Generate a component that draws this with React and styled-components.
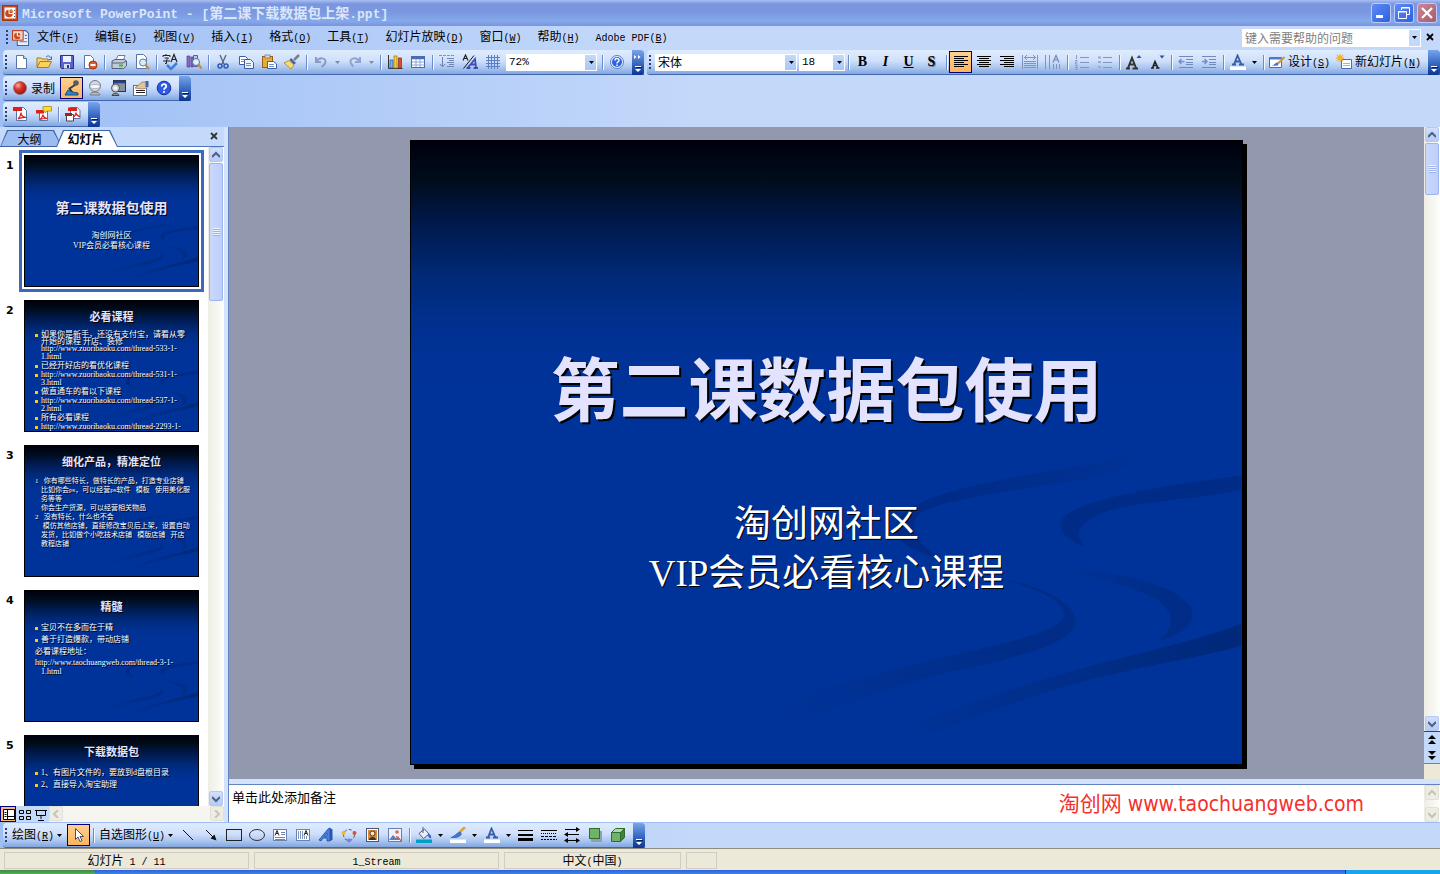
import React from "react";
import styled, { createGlobalStyle, css } from "styled-components";

const CJK = '"Noto Sans CJK SC", sans-serif';

const Global = createGlobalStyle`
  *, *::before, *::after { box-sizing: border-box; }
  body { margin: 0; overflow: hidden; font: 12px/16px ${CJK}; color: #000; background: #c3d7f9; }
  button, input, select, textarea { font: inherit; color: inherit; margin: 0; padding: 0; border: 0; border-radius: 0; background: none; }
  h1, h2, p, ol, ul { margin: 0; padding: 0; font-weight: inherit; font-size: inherit; }
  ol, ul { list-style: none; }
  svg { display: block; flex: none; }
`;

/* ---------- shared pieces ---------- */

const Mono = styled.span`
  font-family: "Liberation Mono", ${CJK};
  font-size: 10px;
`;
const Key = ({ k }) => <Mono>(<u>{k}</u>)</Mono>;

const Gap = styled.span`
  flex: none;
  width: 2px;
`;
const Space = styled.span`
  flex: 1;
`;

const Window = styled.div`
  display: flex;
  flex-direction: column;
  width: 100%;
  height: 100vh;
`;

/* ---------- title bar ---------- */

const TitleBar = styled.header`
  display: flex;
  align-items: center;
  height: 26px;
  padding: 0 3px 0 2px;
  background: linear-gradient(#a8c0f2 0, #7a96df 4px, #7b97e0 12px, #84a9ea 21px, #7c93dd 26px);
`;
const TitleText = styled.h1`
  flex: 1;
  margin-left: 4px;
  white-space: pre;
  font-weight: 700;
  font-size: 14px;
  line-height: 20px;
  color: #dbe6fb;
`;
const TitleLatin = styled.span`
  font-family: "Liberation Mono", monospace;
  font-size: 13px;
`;
const Controls = styled.div`
  display: flex;
  gap: 3px;
`;
const Control = styled.button`
  display: grid;
  place-items: center;
  width: 20px;
  height: 20px;
  border: 1px solid #b9cdf8;
  border-radius: 3px;
  background: ${(p) => (p.$close ? "linear-gradient(135deg,#c98a96,#a9586b)" : "linear-gradient(135deg,#5e8bf5,#2f5fe0)")};
`;

/* ---------- menu ---------- */

const MenuBar = styled.nav`
  display: flex;
  align-items: center;
  height: 24px;
  padding: 0 3px 2px 4px;
  background: linear-gradient(90deg, #9ebef5, #c4d9fa 45%);
`;
const MenuItem = styled.button`
  padding: 0 8px;
  white-space: nowrap;
  line-height: 20px;
`;
const HelpBox = styled.div`
  display: flex;
  width: 179px;
  height: 18px;
  margin: 1px 2px 0 auto;
  padding: 1px;
  background: #fff;
`;
const HelpInput = styled.input`
  flex: 1;
  min-width: 0;
  padding-left: 2px;
  &::placeholder { color: #808080; opacity: 1; }
`;
const DropBox = styled.button`
  display: grid;
  place-items: center;
  width: 11px;
  background: #c3d9fb;
`;
const CloseDoc = styled.button`
  display: grid;
  place-items: center;
  width: 14px;
  height: 16px;
`;

/* ---------- toolbars ---------- */

const Dock = styled.div`
  display: grid;
  gap: 1px;
  background: linear-gradient(90deg, #9ebef5, #c4d9fa 50%);
`;
const DockRow = styled.div`
  display: flex;
  gap: 3px;
  padding-left: 3px;
`;
const Bar = styled.div`
  display: flex;
  align-items: center;
  flex: ${(p) => (p.$grow ? "1" : "none")};
  height: 25px;
  border-bottom: 1px solid #3f67ad;
  border-radius: 4px 0 0 3px;
  background: linear-gradient(#dfecfe 0, #cfe0fb 45%, #a9c5f0 75%, #83a6e0 100%);
`;
const Grip = styled.span`
  flex: none;
  width: 3px;
  height: 15px;
  margin: 0 1px 0 2px;
  background: repeating-linear-gradient(#27417b 0 2px, transparent 2px 4px) 0 0 / 2px 15px no-repeat;
`;
const Sep = styled.span`
  flex: none;
  width: 2px;
  height: 15px;
  margin: 0 1px 0 3px;
  border-left: 1px solid #6a8ccb;
  border-right: 1px solid #f1f9ff;
`;
const ToolButton = styled.button`
  display: flex;
  align-items: center;
  justify-content: center;
  flex: none;
  width: 23px;
  height: 22px;
  ${(p) =>
    p.$on &&
    css`
      border: 1px solid #000080;
      background: linear-gradient(#ffd091, #fdb35c);
    `}
`;
const TextButton = styled.button`
  display: flex;
  align-items: center;
  flex: none;
  gap: 3px;
  height: 22px;
  padding: 0 ${(p) => (p.$menu ? 0 : 3)}px 0 3px;
  white-space: nowrap;
`;
const Drop = styled.button`
  display: grid;
  place-items: center;
  flex: none;
  width: 11px;
  height: 22px;
`;
const OverflowTab = styled.button`
  display: flex;
  align-items: flex-end;
  justify-content: center;
  flex: none;
  width: 12px;
  height: 25px;
  margin-left: ${(p) => (p.$end ? "auto" : "4px")};
  padding-bottom: 2px;
  border-radius: 0 3px 3px 0;
  background: linear-gradient(#79a4ec, #3b6cc4 50%, #0a3590);
`;
const Combo = styled.label`
  position: relative;
  display: flex;
  flex: none;
  width: ${(p) => p.$w}px;
  height: 17px;
  svg { position: absolute; right: 3px; top: 7px; pointer-events: none; }
`;
const Select = styled.select`
  appearance: none;
  width: 100%;
  padding-left: 2px;
  border: 1px solid #fff;
  background: linear-gradient(#c3d9fb, #a9c6f4) right / 11px 100% no-repeat #fff;
  font-family: ${(p) => (p.$mono ? `"Liberation Mono", monospace` : CJK)};
  font-size: ${(p) => (p.$mono ? 11 : 12)}px;
  line-height: 14px;
`;
const BottomDock = styled.div`
  display: flex;
  flex: none;
  height: 26px;
  padding-left: 3px;
  border-top: 1px solid #9ebef5;
  background: linear-gradient(90deg, #9ebef5, #c4d9fa 50%);
`;

const Caret = ({ c = "#000" }) => (
  <svg width="5" height="3" viewBox="0 0 5 3"><path d="M0 0h5L2.500 3z" fill={c} /></svg>
);
const MoreMark = ({ chevrons }) => (
  <svg width="8" height={chevrons ? 20 : 8} viewBox={chevrons ? "0 -12 8 20" : "0 0 8 8"}>
    {chevrons && <path d="M0-10l2.500 2L0-6zM4-10l2.500 2L4-6z" fill="#fff" />}
    <path d="M1 1h6v1H1zM1 4h6L4 7z" fill="#fff" />
    <path d="M2 2h6v1H2z" fill="#001a5c" />
  </svg>
);

/* ---------- icon drawings, all on a 16 unit grid ---------- */

const page = <path d="M3.500 1.500h7l3 3v10h-10z" fill="#fff" stroke="#5a76a8" />;
const lines = (x1, x2, ys, c = "#000") => ys.map((y) => <path key={y} d={`M${x1} ${y}.500H${x2}`} stroke={c} />);

const art = {
  ppt: <><rect x=".500" y=".500" width="15" height="15" fill="#c44a1c" stroke="#a3350f" /><rect x="2.500" y="2.500" width="11" height="11" fill="#fff" /><circle cx="7" cy="8.500" r="3.800" fill="#c44a1c" /><path d="M7 8.500V4.200" stroke="#fff" /><path d="M7 8.500h4.300" stroke="#fff" /><path d="M8.500 7V3.500A4 4 0 0 1 11.500 7z" fill="#e58a5e" /><path d="M12.500 5v1M12.500 8v1M12.500 11v1" stroke="#555" /></>,
  pptDoc: <><path d="M5 1.500h8l2.500 2.500v11.500H5z" fill="#e8f0ff" stroke="#44659b" /><path d="M12 6h2M12 9h2M7 12h7" stroke="#5575ae" /><rect x=".500" y="1.500" width="10" height="9" fill="#f3d2c4" stroke="#b5401a" /><circle cx="5" cy="6.500" r="3" fill="#c9461c" /><path d="M5 6.500V3M5 6.500h3.500" stroke="#fff" /></>,
  blank: <>{page}<path d="M10.500 1.500v3h3" fill="#cddcf4" stroke="#5a76a8" /></>,
  open: <><path d="M1 13V4h4l1 1h6v3" fill="#f7d774" stroke="#a87b18" /><path d="M1 13.500L4 7.500h11.500l-3 6z" fill="#fbd05c" stroke="#a87b18" /><path d="M10 3c2-2 4-1 4.500 1M15.500 2.500v3h-3" fill="none" stroke="#3d66ad" /></>,
  save: <><path d="M1.500 1.500h13v13h-12l-1-1z" fill="#5a62d0" stroke="#2b2f8c" /><rect x="4" y="2" width="8" height="6" fill="#eef3ff" /><rect x="5" y="10" width="6" height="4.500" fill="#d8dcf0" /><rect x="8" y="11" width="2" height="3" fill="#2b2f8c" /></>,
  permission: <><path d="M2.500 1.500h6l3 3v10h-9z" fill="#fff" stroke="#5a76a8" /><circle cx="11" cy="11" r="4" fill="#e25a33" stroke="#a8320f" /><path d="M8.500 11h5" stroke="#fff" strokeWidth="2" /></>,
  print: <><path d="M5 6l2-4.500h7L12.500 6z" fill="#fff" stroke="#6a7fa8" /><path d="M1 7l3-1.500h9.500L15.500 7v5l-3 2.500H1z" fill="#c2cad8" stroke="#55617c" /><path d="M1 9h11l3-2" fill="none" stroke="#55617c" /><rect x="8" y="10.500" width="4" height="2" fill="#35b83e" /></>,
  preview: <><path d="M2.500.500h7l3 3v11h-10z" fill="#fff" stroke="#5a76a8" /><circle cx="9" cy="8.500" r="3.500" fill="#d5ecfb" stroke="#6b7b93" /><path d="M11.500 11l3.500 4" stroke="#c58a36" strokeWidth="2.200" /></>,
  research: <><path d="M1 2h3v11H1zM5 3h2v10H5z" fill="#8a6bc7" stroke="#533b8f" strokeWidth=".700" /><path d="M7.500 1.500h4v11h-4z" fill="#b9c9e9" stroke="#4a619b" /><circle cx="10" cy="8" r="3.500" fill="#dff1fc" stroke="#57709a" /><path d="M12.500 10.500l3 4" stroke="#c58a36" strokeWidth="2.200" /></>,
  cut: <><path d="M5 1l4 9M11 1L7 10" stroke="#55647e" strokeWidth="1.300" /><circle cx="5" cy="12" r="2" fill="none" stroke="#2f58b8" strokeWidth="1.500" /><circle cx="11" cy="12" r="2" fill="none" stroke="#2f58b8" strokeWidth="1.500" /></>,
  copy: <><path d="M1.500 2.500h6l2 2v6h-8z" fill="#fff" stroke="#3a5da5" /><path d="M6.500 5.500h6l3 3v6h-9z" fill="#eaf1ff" stroke="#3a5da5" />{lines(3, 6, [5, 7], "#6c8fd0")}{lines(8, 13, [9, 11], "#6c8fd0")}</>,
  paste: <><rect x="1.500" y="2.500" width="10" height="11" fill="#eaa93b" stroke="#96621a" /><rect x="4" y="1" width="5" height="3" fill="#d9dbe2" stroke="#6a6f80" strokeWidth=".700" /><path d="M6.500 7.500h6l3 2.500v4.500h-9z" fill="#fff" stroke="#3a5da5" />{lines(8, 13, [10, 12], "#6c8fd0")}</>,
  painter: <><path d="M15 1l-5 5" stroke="#79808e" strokeWidth="2.500" /><path d="M7 4l5 5-2 1.500L5.500 6z" fill="#4c5f9a" /><path d="M5 6.500L10 11l-3 4L0 9z" fill="#f3dd71" stroke="#a98720" strokeWidth=".800" /></>,
  undo: <path d="M3 3v5h5M3.500 7.500C6 3 13 3.500 12.500 8c-.300 2-2 3.500-4 5" fill="none" stroke="#8a9cc4" strokeWidth="2" />,
  redo: <path d="M13 3v5H8M12.500 7.500C10 3 3 3.500 3.500 8c.300 2 2 3.500 3 4.500" fill="none" stroke="#8fa4d0" strokeWidth="2" />,
  chart: <><path d="M1.500 1v13.500H15.500" fill="none" stroke="#333" /><rect x="3" y="6" width="3" height="8" fill="#7fb0e8" stroke="#23508f" strokeWidth=".700" /><rect x="7" y="2" width="3" height="12" fill="#f4cc42" stroke="#98741a" strokeWidth=".700" /><rect x="11.500" y="4" width="3" height="10" fill="#db4b2b" stroke="#8f2b12" strokeWidth=".700" /></>,
  table: <><rect x="1.500" y="2.500" width="13" height="11" fill="#fff" stroke="#4a6cb0" /><path d="M2 4h12" stroke="#4a6cb0" strokeWidth="2.500" /><path d="M2 8h12M2 11h12M6 5v8M10 5v8" stroke="#8ba6d8" /></>,
  expand: <><path d="M3.500 3v9M1 10l2.500 3L6 10" fill="none" stroke="#6f83ad" /><path d="M0 1.500h16" stroke="#7f94be" strokeDasharray="3 1" />{lines(8, 15, [4, 8, 12], "#7087b8")}{lines(10, 15, [6, 10], "#7087b8")}</>,
  showFormat: <><path d="M1 6.500L3.500 1 6 6.500M2 4.500h3" fill="none" stroke="#222" strokeWidth="1.200" /><path d="M1.500 14.500L12 1.500" stroke="#111" /><path d="M6 13.500L13 5l1 8.500M9 10.500h5M4.500 14h4M11.500 14H16" fill="none" stroke="#3b4fb5" strokeWidth="1.800" /></>,
  grid: <path d="M3.500 1v14M6.500 1v14M9.500 1v14M12.500 1v14M1 3.500h14M1 6.500h14M1 9.500h14M1 12.500h14" stroke="#5a7fc4" />,
  help: <><circle cx="8" cy="8" r="6.500" fill="#e6f0ff" stroke="#5c7fc4" /><circle cx="8" cy="8" r="5" fill="#2c63dc" /><path d="M6 6.500c0-3 4.200-2.600 4 0C9.800 8 8 7.800 8 9.500M8 10.500v1.500" fill="none" stroke="#fff" strokeWidth="1.500" /></>,
  alignL: <>{lines(1, 15, [2, 6, 10])}{lines(1, 11, [4, 8, 12])}</>,
  alignC: <>{lines(1, 15, [2, 6, 10])}{lines(3, 13, [4, 8, 12])}</>,
  alignR: <>{lines(1, 15, [2, 6, 10])}{lines(5, 15, [4, 8, 12])}</>,
  distribute: <><path d="M.500 1v14M15.500 1v14M2 3.500h12M5 1l-2.500 2.500L5 6M11 1l2.500 2.500L11 6" fill="none" stroke="#8093c0" />{lines(2, 14, [7, 9, 11, 13], "#8093c0")}</>,
  vertical: <><path d="M.500 1v14M4.500 1v14M8.500 10v5M11.500 10v5M14.500 10v5" stroke="#8093c0" /><path d="M8 8.500l3-7 3 7M9.500 6h3.500" fill="none" stroke="#7388bb" strokeWidth="1.200" /></>,
  numbers: <>{lines(6, 15, [3, 8, 13], "#8395c0")}<path d="M2.500 1v4M1 6.500h2v1.500H1.500V10H4M1 11.500h2v4H1M1 13.500h2" fill="none" stroke="#8a9cc6" /></>,
  bullets: <>{lines(6, 15, [3, 8, 13], "#8395c0")}<path d="M1 2.500h3v2H1zM1 7h3v2H1zM1 12h3v2H1z" fill="#9aa9cc" /></>,
  grow: <><path d="M0 14.500h4M6.500 14.500H12M2 14L6 4l4 10M3.500 10.500h5" fill="none" stroke="#333" strokeWidth="2" /><path d="M10.500 4h5L13 1z" fill="#2a4fa6" /></>,
  shrink: <><path d="M2 14h3M7 14h3.500M3.500 14L6 7.500 9 14M4.500 11.500h3.500" fill="none" stroke="#222" strokeWidth="1.600" /><path d="M10.500 1.500h5L13 4.500z" fill="#2a4fa6" /></>,
  outdent: <>{lines(1, 15, [2, 13], "#7388bb")}{lines(8, 15, [5, 8, 10], "#7388bb")}<path d="M6.500 7.500H1M3.500 5L1 7.500 3.500 10" fill="none" stroke="#6f8fcf" strokeWidth="1.500" /></>,
  indent: <>{lines(1, 15, [2, 13], "#7388bb")}{lines(8, 15, [5, 8, 10], "#7388bb")}<path d="M1 7.500h5M3.500 5L6 7.500 3.500 10" fill="none" stroke="#6f8fcf" strokeWidth="1.500" /></>,
  fontColor: <><path d="M2 10.500h4M9 10.500h5M4 10.500L7.500 1.500l4 9M5.500 7.500h4.500" fill="none" stroke="#3a5da8" strokeWidth="1.800" /><rect x="0" y="12.500" width="16" height="3.500" fill="#fff" /></>,
  design: <><path d="M.500 3.500h12v10H.500z" fill="#fff" stroke="#4a6cae" /><path d="M1 4.500h11" stroke="#4a7fdb" strokeWidth="2" /><path d="M2 12c3 0 4-4 8-4l-1 3.500z" fill="#3f76d8" /><path d="M15.500 3L9.500 9" stroke="#d69a2b" strokeWidth="2.200" /></>,
  newSlide: <><path d="M5.500 5.500h10v9h-10z" fill="#fff" stroke="#4a6cae" />{lines(7, 14, [9, 11], "#9db4e0")}<path d="M4 0v8M0 4h8M1 1l6 6M7 1L1 7" stroke="#f0b62b" strokeWidth="1.300" /></>,
  record: <><defs><radialGradient id="ball" cx=".35" cy=".3" r=".8"><stop offset="0" stopColor="#f7b0a4" /><stop offset=".4" stopColor="#d8332a" /><stop offset="1" stopColor="#8a1010" /></radialGradient></defs><circle cx="8" cy="8" r="6.500" fill="url(#ball)" stroke="#8d5a5a" strokeWidth=".600" /></>,
  mic: <><circle cx="12" cy="3" r="2.800" fill="#555d6a" /><path d="M11 5L5.500 8.500l3 4" fill="none" stroke="#2c3a4c" strokeWidth="1.800" /><path d="M1 15l3-5 4 2 6 1v2z" fill="#2f86c9" stroke="#174f86" /></>,
  webcam: <><circle cx="8" cy="6" r="5.500" fill="#d5d8de" stroke="#777c88" /><path d="M3 5.500c2-1.500 8-1.500 10 0v2c-2 1.500-8 1.500-10 0z" fill="#f6f7fa" stroke="#9ea2ad" strokeWidth=".700" /><path d="M3 15c1-4 9-4 10 0z" fill="#b5b9c2" stroke="#777c88" /></>,
  camWin: <><rect x="3.500" y=".500" width="12" height="11" fill="#8a909c" stroke="#333" /><path d="M4 2h11" stroke="#1b3f9c" strokeWidth="2.500" /><circle cx="5.500" cy="8" r="4" fill="#d5d8de" stroke="#555" /><circle cx="5.500" cy="8" r="1.500" fill="#fff" /><path d="M2 15.500c.500-3 6.500-3 7 0z" fill="#888d98" stroke="#444" /></>,
  props: <><rect x=".500" y="5.500" width="13" height="10" fill="#fff" stroke="#5b6f9f" />{lines(3, 12, [10, 12], "#222")}<path d="M2 8l7-6h5v6l-5 1z" fill="#e4c39a" stroke="#8c6a45" strokeWidth=".700" /><path d="M12.500 1h3v6h-3z" fill="#3f66b5" /></>,
  qmark: <><circle cx="8" cy="8" r="6.800" fill="#2f5be4" stroke="#1a2f9a" /><path d="M5.700 6.500c0-3.300 4.700-3 4.500-.200C10 8 8 8 8 9.800M8 11v1.700" fill="none" stroke="#fff" strokeWidth="1.800" /></>,
  pdf: <>{page}<rect x="0" y="1" width="9" height="4" fill="#d9221c" /><path d="M5 13c2-2 3-4 3-6.500 0 3 2 4.500 5 5-3-.300-5.500 0-8 1.500z" fill="none" stroke="#d9221c" strokeWidth="1.200" /></>,
  pdfMail: <><path d="M3.500 4.500h8v10h-8z" fill="#fff" stroke="#5a76a8" /><rect x="0" y="4" width="8" height="3.500" fill="#d9221c" /><path d="M4 13.500c2-2 3-3 3-5 0 2 2 3.500 4 4-3 0-5 0-7 1z" fill="none" stroke="#d9221c" strokeWidth="1.200" /><path d="M7 .500h8.500V5H11L9 7V5H7z" fill="#ffd83a" stroke="#b08a10" strokeWidth=".800" /></>,
  pdfReview: <><path d="M5.500 1.500h7l2.500 3v8H5.500z" fill="#fff" stroke="#5a76a8" /><rect x="3" y="1.500" width="9" height="3.500" fill="#d9221c" /><path d="M1.500 8.500h7v6.500h-7z" fill="#fff" stroke="#444" /><rect x="0" y="7" width="7" height="3" fill="#a02020" /><path d="M8 11c2-1 3-3 3-4.500 0 3 2 3.500 4 4" fill="none" stroke="#d9221c" strokeWidth="1.300" /></>,
  pointer: <path d="M4.500 1.500v11l2.500-2.500 2 4.500 2-1-2-4h3.500z" fill="#fff" stroke="#47506b" />,
  line: <path d="M3 3l10 10" stroke="#111" />,
  arrow: <><path d="M3 3l8 8" stroke="#111" /><path d="M13.500 13.500l-2-6-4 4z" fill="#111" /></>,
  rect: <rect x=".500" y="2.500" width="15" height="11" fill="none" stroke="#222" />,
  oval: <ellipse cx="8" cy="8" rx="7.500" ry="5.500" fill="none" stroke="#333" />,
  textBox: <><rect x="1.500" y="2.500" width="13" height="11" fill="#fff" stroke="#6a83b5" /><path d="M3 8.500L5 3.500l2 5M4 6.500h2" fill="none" stroke="#222" />{lines(9, 13, [5, 7], "#6a83b5")}{lines(3, 13, [10, 12], "#6a83b5")}</>,
  vTextBox: <><rect x="1.500" y="2.500" width="13" height="11" fill="#fff" stroke="#6a83b5" /><path d="M3.500 4v8M5.500 4v8M7.500 4v8M9.500 9v3M11.500 9v3" stroke="#8296c0" /><path d="M9 8.500l2-5 2 5M10 6.500h2" fill="none" stroke="#222" /></>,
  wordArt: <><path d="M1 13l9-11 2-1v13H9v-3H5l-2 3zM6.500 9H9V6z" fill="#4b82e0" stroke="#1f469e" strokeWidth=".800" fillRule="evenodd" /><path d="M12 1l2.500 1.500V13L12 14z" fill="#2a56b2" /></>,
  diagram: <><circle cx="8" cy="8" r="5.500" fill="none" stroke="#555" strokeDasharray="3 2" /><circle cx="8" cy="13.500" r="2" fill="#7a7fe0" /><circle cx="2.500" cy="6" r="2" fill="#e9b833" /><circle cx="13.500" cy="6" r="2" fill="#d6543a" /></>,
  clipArt: <><rect x="2.500" y="1.500" width="12" height="13" fill="#fff" stroke="#44577f" /><rect x="4" y="3" width="9" height="10" fill="#d88b3c" /><circle cx="8.500" cy="6.500" r="2.500" fill="#fbe3bf" stroke="#5b3313" /><path d="M5 13c0-4 7-4 7 0z" fill="#333" /></>,
  picture: <><rect x="1.500" y="1.500" width="13" height="13" fill="#eaf2ff" stroke="#6a7fae" /><path d="M2 13l4-5 3 3 2-2 3 4z" fill="#5f7ac1" /><circle cx="10" cy="5" r="1.800" fill="#e2653a" /><path d="M9 9l5 5" stroke="#d45f3a" /></>,
  fill: <><path d="M3 6.500L8.500 2l4.500 5-5.500 4.500z" fill="#e9eef8" stroke="#4b5a78" /><path d="M7 6V0" stroke="#4b5a78" /><path d="M12.500 7c2 1 2.500 2.500 2 4-1.500-.500-2-2-2-4z" fill="#2e62c6" stroke="#2e62c6" /><rect x="0" y="12.500" width="16" height="3.500" fill="#00a0c6" /></>,
  brush: <><path d="M15 0L9 6" stroke="#d9a53a" strokeWidth="2.600" /><path d="M10 5l1.500 2C9 11 5 10.500 1 10.500 5 9.500 6 6 10 5z" fill="#3f76d8" stroke="#24509f" strokeWidth=".600" /><rect x="0" y="12.500" width="16" height="3.500" fill="#fff" /></>,
  lineStyle: <path d="M0 3h15v1H0zM0 7h15v2H0zM0 11h15v3H0z" fill="#000" />,
  dashStyle: <><path d="M0 3.500h16" stroke="#000" /><path d="M0 6.500h16" stroke="#000" strokeDasharray="1 1" /><path d="M0 9.500h16" stroke="#000" strokeDasharray="3 1" /><path d="M0 12.500h16" stroke="#000" strokeDasharray="2 1" /></>,
  arrowStyle: <><path d="M1 2.500h12M3 7.500h12M3 13.500h10" stroke="#000" /><path d="M12 0l4 2.500L12 5zM4 5L0 7.500 4 10zM12 11l4 2.500-4 2.500zM4 11l-4 2.500L4 16z" fill="#000" /></>,
  shadow: <><rect x="4" y="4" width="11" height="11" fill="#8f9fae" /><rect x="2.500" y="1.500" width="10" height="10" fill="#6fb366" stroke="#2f6b2d" /></>,
  cube: <><path d="M1.500 5.500h9v9h-9z" fill="#6fb366" stroke="#2f6b2d" /><path d="M1.500 5.500l4-4h9l-4 4z" fill="#b0dca4" stroke="#2f6b2d" /><path d="M10.500 5.500l4-4v9l-4 4z" fill="#3d8438" stroke="#2f6b2d" /></>,
  normal: <><path d="M2.500 2.500h11v10h-11z" fill="#fff" stroke="#000" /><path d="M6.500 3v10M7 9.500h6M3.500 5.500h2M3.500 7.500h2M3.500 9.500h2" stroke="#000" /></>,
  sorter: <path d="M2.500 3.500h4v3h-4zM9.500 3.500h4v3h-4zM2.500 9.500h4v3h-4zM9.500 9.500h4v3h-4z" fill="none" stroke="#000" />,
  show: <path d="M2 3.500h12M3.500 4v4.500h9V4M8 9v3M5 13.500h6" fill="none" stroke="#000" />,
};

const Icon = ({ n, s = 16 }) => <svg width={s} height={s} viewBox="0 0 16 16" fill="none" aria-hidden="true">{art[n]}</svg>;
const Tool = ({ n, label, on }) => <ToolButton $on={on} aria-label={label}><Icon n={n} /></ToolButton>;
const Tools = ({ items }) =>
  items.map(([n, label, on], i) => {
    if (n === "|") return <Sep key={i} />;
    if (n === "v") return <Drop key={i} aria-label={label}><Caret c={on} /></Drop>;
    return <Tool key={i} n={n} label={label} on={on} />;
  });

const Letter = styled.span`
  font: ${(p) => (p.$i ? "italic " : "")}700 14px/18px "Liberation Serif", serif;
  text-decoration: ${(p) => (p.$u ? "underline" : "none")};
  text-shadow: ${(p) => (p.$s ? "1px 1px 1px #5a6d92" : "none")};
`;

/* ---------- workspace ---------- */

const Workspace = styled.main`
  display: flex;
  flex: 1;
  min-height: 0;
  background: #d3e3fb;
`;
const Outline = styled.aside`
  display: flex;
  flex-direction: column;
  flex: none;
  width: 224px;
`;
const TabStrip = styled.div`
  display: flex;
  align-items: flex-end;
  flex: none;
  height: 20px;
  background: linear-gradient(#4e76b9, #4e76b9) bottom / 100% 1px no-repeat #c3dafb;
`;
const Tab = styled.button`
  position: relative;
  isolation: isolate;
  width: 62px;
  height: 17px;
  margin-right: -6px;
  padding-right: 3px;
  line-height: 15px;
  font-weight: ${(p) => (p.$on ? 700 : 400)};
  z-index: ${(p) => (p.$on ? 1 : 0)};
  clip-path: polygon(0 100%, 7px 0, calc(100% - 8px) 0, 100% 100%);
  background: #3c62a8;
  &::before {
    content: "";
    position: absolute;
    z-index: -1;
    inset: 1px 1px ${(p) => (p.$on ? 0 : 1)}px;
    background: ${(p) => (p.$on ? "#fff" : "#9dbcf2")};
    clip-path: polygon(0 100%, 7px 0, calc(100% - 8px) 0, 100% 100%);
  }
`;
const CloseTab = styled.button`
  display: grid;
  place-items: center;
  width: 15px;
  height: 18px;
  margin: 0 3px auto auto;
`;
const ThumbArea = styled.div`
  display: flex;
  flex: 1;
  min-height: 0;
`;
const ThumbList = styled.ol`
  flex: 1;
  overflow: hidden;
  padding-top: 8px;
  background: #fff;
`;
const ThumbItem = styled.li`
  display: flex;
  margin-bottom: 13px;
`;
const ThumbNo = styled.span`
  width: 24px;
  padding: 4px 0 0 6px;
  font: 700 11px/14px "DejaVu Sans", sans-serif;
`;

/* ---------- slide surface ---------- */

const Surface = styled.section`
  position: relative;
  isolation: isolate;
  overflow: hidden;
  border: 1px solid #000;
  color: #fff;
  background: linear-gradient(#00000f 0, #000c1a 6%, #001744 12%, #002060 17%, #002a78 22%, #002f8c 28%, #003297 34%, #003399 40%);
  > svg { position: absolute; inset: 0; width: 100%; height: 100%; z-index: -1; }
`;
const Thumb = styled(Surface)`
  width: 175px;
  height: 132px;
  font: 8px/9px "Liberation Serif", ${CJK};
  text-shadow: 1px 1px 0 #000;
  box-shadow: ${(p) => (p.$on ? "0 0 0 2px #fff, 0 0 0 5px #3d69bd" : "none")};
`;
const ThumbTitle = styled.h2`
  margin-top: ${(p) => (p.$cover ? 45 : 8)}px;
  margin-bottom: ${(p) => (p.$cover ? 14 : 7)}px;
  text-align: center;
  font-weight: 700;
  font-size: ${(p) => (p.$cover ? 14 : 11)}px;
  line-height: 16px;
  color: #e3e3ff;
`;
const CoverLine = styled.p`
  line-height: 10px;
  text-align: center;
`;
const Lines = styled.ul`
  padding-left: 10px;
  font-size: ${(p) => (p.$small ? 7 : 8)}px;
`;
const Line = styled.li`
  height: ${(p) => p.$h || 9}px;
  line-height: ${(p) => p.$h || 9}px;
  padding-left: ${(p) => (p.$flush ? 0 : 6)}px;
  white-space: pre;
  ${(p) =>
    p.$dot &&
    css`
      background: linear-gradient(#ffcc00, #ffcc00) 0 60% / 3px 3px no-repeat;
    `}
`;

const Swirls = ({ id }) => (
  <svg viewBox="0 0 832 625" preserveAspectRatio="none" aria-hidden="true">
    <defs>
      <linearGradient id={`${id}a`} x1="0" x2="1"><stop offset="0" stopColor="#002a84" /><stop offset=".4" stopColor="#002c88" stopOpacity=".8" /><stop offset="1" stopColor="#002a80" stopOpacity="0" /></linearGradient>
      <linearGradient id={`${id}b`} x1="0" x2="1"><stop offset="0" stopColor="#002a80" stopOpacity="0" /><stop offset=".8" stopColor="#002a80" stopOpacity=".7" /></linearGradient>
      <linearGradient id={`${id}c`} x1="0" x2="1"><stop offset="0" stopColor="#002878" stopOpacity="0" /><stop offset="1" stopColor="#002878" stopOpacity=".95" /></linearGradient>
    </defs>
    <path d="M741 267C742 300 720 315 690 322C620 335 540 345 500 368C470 388 485 408 532 420C503 402 495 385 512 372C545 355 640 348 702 333C730 322 748 305 741 267Z" fill={`url(#${id}a)`} />
    <path d="M831 335C775 344 650 358 650 385C651 396 662 403 677 408C665 400 665 388 680 380C700 362 780 361 831 350Z" fill="#002a80" opacity=".7" />
    <path d="M644 427C690 431 730 438 756 449C795 468 790 490 745 503C766 490 764 474 748 461C722 445 680 438 644 427Z" fill={`url(#${id}b)`} />
    <path d="M587 438C630 446 665 462 665 483C662 506 600 520 530 535C465 552 420 572 367 588V563C425 545 500 525 559 512C610 500 655 490 654 473C648 457 618 447 587 438Z" fill={`url(#${id}b)`} />
    <path d="M831 484C800 497 740 511 690 524C610 545 540 570 483 593H527C560 580 630 552 690 538C740 525 800 516 831 506Z" fill={`url(#${id}c)`} />
  </svg>
);

const SlideThumb = ({ no, title, on, small, children }) => (
  <ThumbItem>
    <ThumbNo>{no}</ThumbNo>
    <Thumb $on={on}>
      <Swirls id={`t${no}`} />
      <ThumbTitle $cover={on}>{title}</ThumbTitle>
      {on ? children : <Lines $small={small}>{children}</Lines>}
    </Thumb>
  </ThumbItem>
);

/* ---------- scroll bars ---------- */

const VScroll = styled.div`
  display: flex;
  flex-direction: column;
  flex: none;
  width: 16px;
  padding: 0 1px;
  background: linear-gradient(90deg, #eeede5, #fefefb);
`;
const Arrow = styled.button`
  display: grid;
  place-items: center;
  flex: none;
  width: 14px;
  height: 15px;
  border: 1px solid ${(p) => (p.$off ? "#e3e1d5" : "#b5c8f3")};
  border-radius: 2px;
  background: ${(p) => (p.$off ? "#eeede4" : "linear-gradient(#d2dffc, #b7cbf6)")};
`;
const ScrollThumb = styled.div`
  display: grid;
  place-items: center;
  flex: none;
  height: ${(p) => p.$size};
  margin-top: 1px;
  border: 1px solid #9db5ee;
  border-radius: 2px;
  background: linear-gradient(90deg, #cad8fc, #bccefb);
  &::before {
    content: "";
    width: 7px;
    height: 8px;
    background: repeating-linear-gradient(#eef4fe 0 1px, #9ab3ee 1px 2px);
  }
`;
const Chevron = ({ d, off }) => (
  <svg width="8" height="8" viewBox="0 0 8 8" fill="none" stroke={off ? "#c6c4b6" : "#4d6185"} strokeWidth="2">
    <path d={{ up: "M0 6l4-4 4 4", down: "M0 2l4 4 4-4", left: "M6 0L2 4l4 4", right: "M2 0l4 4-4 4" }[d]} />
  </svg>
);
const ViewRow = styled.div`
  display: flex;
  flex: none;
  height: 16px;
  background: #c3dafb;
`;
const ViewButton = styled.button`
  display: grid;
  place-items: center;
  width: 16px;
  height: 16px;
  border: 1px solid ${(p) => (p.$on ? "#000080" : "transparent")};
  background: ${(p) => (p.$on ? "#fdb96a" : "none")};
`;
const HScroll = styled.div`
  display: flex;
  justify-content: space-between;
  flex: 1;
  margin-left: 1px;
  background: #f6f5ef;
`;

/* ---------- editing pane ---------- */

const Editor = styled.div`
  display: flex;
  flex-direction: column;
  flex: 1;
  min-width: 0;
  margin-left: 4px;
  border-left: 1px solid #6384c0;
`;
const StageRow = styled.div`
  display: flex;
  flex: 1;
  min-height: 0;
`;
const Stage = styled.div`
  display: flex;
  justify-content: center;
  flex: 1;
  min-width: 0;
  padding: 13px 0 14px;
  background: #9299af;
`;
const Slide = styled(Surface)`
  display: flex;
  flex-direction: column;
  align-items: center;
  aspect-ratio: 4 / 3;
  box-shadow: 4px 4px 0 #000;
  font-family: "Liberation Serif", ${CJK};
`;
const SlideTitle = styled.h2`
  margin-top: 212px;
  font-weight: 700;
  font-size: 69px;
  line-height: 80px;
  color: #e3e3ff;
  text-shadow: 2px 2px 0 #000;
  white-space: nowrap;
`;
const SlideSub = styled.p`
  margin-top: 67px;
  font-size: 37px;
  line-height: 49px;
  text-align: center;
  text-shadow: 1px 1px 0 #000;
  white-space: nowrap;
`;
const Jump = styled.button`
  display: grid;
  place-items: center;
  height: 16px;
  margin: 0 -1px;
  background: #c3dafb;
  border-top: ${(p) => (p.$first ? "1px solid #2c4377" : "0")};
`;
const Corner = styled.div`
  flex: none;
  height: 16px;
  margin: 0 -1px;
  border-top: 1px solid #6384c0;
  background: #ece9d8;
`;
const NotesRow = styled.div`
  display: flex;
  flex: none;
  height: 38px;
  margin-top: 5px;
  border-top: 1px solid #6384c0;
  background: #fff;
`;
const Notes = styled.textarea`
  flex: 1;
  min-width: 0;
  resize: none;
  outline: none;
  padding: 3px;
  font-size: 13px;
  line-height: 18px;
  &::placeholder { color: #000; opacity: 1; }
`;
const Watermark = styled.p`
  margin-right: 60px;
  font: 21px/38px "DejaVu Sans Condensed", "Noto Sans", ${CJK};
  color: #f5302c;
  white-space: nowrap;
`;

/* ---------- status and task bars ---------- */

const StatusBar = styled.footer`
  display: flex;
  gap: 5px;
  flex: none;
  height: 22px;
  padding: 3px 4px 1px;
  border-top: 1px solid #8f8d80;
  background: #ece9d8;
`;
const StatusCell = styled.span`
  width: ${(p) => p.$w}px;
  border: 1px solid #cfccc4;
  line-height: 14px;
  text-align: center;
  white-space: pre;
`;
const TaskBar = styled.div`
  display: flex;
  flex: none;
  height: 4px;
  background: linear-gradient(#2a63d6, #3f82ee);
`;
const StartEdge = styled.span`
  width: 95px;
  border-radius: 0 6px 0 0;
  background: linear-gradient(#3d8b3d, #58ad55);
`;
const TrayEdge = styled.span`
  width: 95px;
  margin-left: auto;
  border-left: 1px solid #0a3a8c;
  background: #19a5ee;
`;

const menus = [["文件", "F"], ["编辑", "E"], ["视图", "V"], ["插入", "I"], ["格式", "O"], ["工具", "T"], ["幻灯片放映", "D"], ["窗口", "W"], ["帮助", "H"]];

export default function App() {
  return (
    <Window>
      <Global />
      <TitleBar>
        <Icon n="ppt" />
        <TitleText>
          <TitleLatin>Microsoft PowerPoint - [</TitleLatin>第二课下载数据包上架<TitleLatin>.ppt]</TitleLatin>
        </TitleText>
        <Controls>
          <Control aria-label="最小化"><svg width="14" height="14"><path d="M2 9h7v3H2z" fill="#fff" /></svg></Control>
          <Control aria-label="还原"><svg width="14" height="14" fill="none" stroke="#fff"><path d="M4.500 4V1.500h8v7H10M4 2h9" /><path d="M1.500 5.500h8v7h-8zM1 6h9" /></svg></Control>
          <Control $close aria-label="关闭"><svg width="14" height="14"><path d="M2 2l10 10M12 2L2 12" stroke="#fff" strokeWidth="2.200" /></svg></Control>
        </Controls>
      </TitleBar>

      <MenuBar>
        <Grip />
        <Gap />
        <Icon n="pptDoc" s={17} />
        {menus.map(([t, k]) => <MenuItem key={k}>{t}<Key k={k} /></MenuItem>)}
        <MenuItem><Mono>Adobe PDF</Mono><Key k="B" /></MenuItem>
        <HelpBox>
          <HelpInput aria-label="键入需要帮助的问题" placeholder="键入需要帮助的问题" />
          <DropBox aria-label="展开"><Caret /></DropBox>
        </HelpBox>
        <CloseDoc aria-label="关闭文档"><svg width="8" height="8"><path d="M1 1l6 6M7 1L1 7" stroke="#000" strokeWidth="1.800" /></svg></CloseDoc>
      </MenuBar>

      <Dock>
        <DockRow>
          <Bar>
            <Grip />
            <Tools items={[["blank", "新建"], ["open", "打开"], ["save", "保存"], ["permission", "权限"], ["|"], ["print", "打印"], ["preview", "打印预览"], ["|"]]} />
            <ToolButton aria-label="拼写检查">
              <svg width="18" height="18" viewBox="0 0 18 18" fill="none"><path d="M4 1v1.500M1 4V2.500h7V4M2.500 5h4L4.500 7M1 8h7M4.500 7v3.500H3" stroke="#222" /><path d="M9 9l3-7.500L15 9M10 6.500h4" stroke="#222" strokeWidth="1.200" /><path d="M5 12l4 4 6-6" stroke="#3f7fdc" strokeWidth="2.500" /></svg>
            </ToolButton>
            <Tools items={[["research", "信息检索"], ["|"], ["cut", "剪切"], ["copy", "复制"], ["paste", "粘贴"], ["painter", "格式刷"], ["|"], ["undo", "撤消"], ["v", "撤消列表", "#7c8bab"], ["redo", "恢复"], ["v", "恢复列表", "#7c8bab"], ["|"], ["chart", "插入图表"], ["table", "插入表格"], ["|"], ["expand", "全部展开"], ["showFormat", "显示格式"], ["grid", "显示网格"]]} />
            <Gap />
            <Combo $w={91} aria-label="显示比例"><Select $mono defaultValue="72%"><option>72%</option></Select><Caret /></Combo>
            <Gap />
            <Sep />
            <Tool n="help" label="帮助" />
            <OverflowTab aria-label="工具栏选项"><MoreMark chevrons /></OverflowTab>
          </Bar>
          <Bar $grow>
            <Grip />
            <Gap />
            <Combo $w={142} aria-label="字体"><Select defaultValue="宋体"><option>宋体</option></Select><Caret /></Combo>
            <Gap />
            <Combo $w={46} aria-label="字号"><Select $mono defaultValue="18"><option>18</option></Select><Caret /></Combo>
            <Sep />
            <ToolButton aria-label="加粗"><Letter>B</Letter></ToolButton>
            <ToolButton aria-label="倾斜"><Letter $i>I</Letter></ToolButton>
            <ToolButton aria-label="下划线"><Letter $u>U</Letter></ToolButton>
            <ToolButton aria-label="阴影"><Letter $s>S</Letter></ToolButton>
            <Tools items={[["|"], ["alignL", "左对齐", true], ["alignC", "居中"], ["alignR", "右对齐"], ["distribute", "分散对齐"], ["vertical", "更改文字方向"], ["|"], ["numbers", "编号"], ["bullets", "项目符号"], ["|"], ["grow", "增大字号"], ["shrink", "减小字号"], ["|"], ["outdent", "减少缩进量"], ["indent", "增加缩进量"], ["|"], ["fontColor", "字体颜色"], ["v", "字体颜色列表"], ["|"]]} />
            <TextButton><Icon n="design" /><span>设计<Key k="S" /></span></TextButton>
            <TextButton><Icon n="newSlide" /><span>新幻灯片<Key k="N" /></span></TextButton>
            <OverflowTab $end aria-label="工具栏选项"><MoreMark /></OverflowTab>
          </Bar>
        </DockRow>
        <DockRow>
          <Bar>
            <Grip />
            <TextButton><Icon n="record" />录制</TextButton>
            <Gap />
            <Tools items={[["mic", "麦克风", true], ["webcam", "摄像头"], ["camWin", "摄像头窗口"], ["props", "属性"], ["qmark", "帮助"]]} />
            <OverflowTab aria-label="工具栏选项"><MoreMark /></OverflowTab>
          </Bar>
        </DockRow>
        <DockRow>
          <Bar>
            <Grip />
            <Tools items={[["pdf", "转换为 PDF"], ["pdfMail", "转换并发送"], ["|"], ["pdfReview", "转换并审阅"]]} />
            <OverflowTab aria-label="工具栏选项"><MoreMark /></OverflowTab>
          </Bar>
        </DockRow>
      </Dock>

      <Workspace>
        <Outline>
          <TabStrip>
            <Tab>大纲</Tab>
            <Tab $on>幻灯片</Tab>
            <CloseTab aria-label="关闭窗格"><svg width="8" height="8"><path d="M1 1l6 6M7 1L1 7" stroke="#333" strokeWidth="1.800" /></svg></CloseTab>
          </TabStrip>
          <ThumbArea>
            <ThumbList>
              <SlideThumb no={1} on title="第二课数据包使用">
                <CoverLine>淘创网社区</CoverLine>
                <CoverLine>VIP会员必看核心课程</CoverLine>
              </SlideThumb>
              <SlideThumb no={2} title="必看课程">
                <Line $dot $h={6}>如果你是新手，还没有支付宝，请看从零</Line>
                <Line $h={7}>开始的课程 开店、装修</Line>
                <Line $h={8}>http://www.zuoribaoku.com/thread-533-1-</Line>
                <Line $h={8}>1.html</Line>
                <Line $dot>已经开好店的看优化课程</Line>
                <Line $dot>http://www.zuoribaoku.com/thread-531-1-</Line>
                <Line $h={8}>3.html</Line>
                <Line $dot>做直通车的看以下课程</Line>
                <Line $dot>http://www.zuoribaoku.com/thread-537-1-</Line>
                <Line $h={8}>2.html</Line>
                <Line $dot>所有必看课程</Line>
                <Line $dot>http://www.zuoribaoku.com/thread-2293-1-</Line>
              </SlideThumb>
              <SlideThumb no={3} small title="细化产品，精准定位">
                <Line $flush>1   你有哪些特长，做特长的产品，打造专业店铺</Line>
                <Line>比如你会ps，可以经营ps软件   模板   使用美化服</Line>
                <Line>务等等</Line>
                <Line>你会生产货源，可以经营相关物品</Line>
                <Line $flush>2   没有特长，什么也不会</Line>
                <Line> 模仿其他店铺，直接修改宝贝后上架，设置自动</Line>
                <Line>发货，比如做个小吃技术店铺   模版店铺   开店</Line>
                <Line>教程店铺</Line>
              </SlideThumb>
              <SlideThumb no={4} title="精髓">
                <Line $dot $h={12}>宝贝不在多而在于精</Line>
                <Line $dot $h={12}>善于打造爆款，带动店铺</Line>
                <Line $flush $h={12}>必看课程地址：</Line>
                <Line $flush>http://www.taochuangweb.com/thread-3-1-</Line>
                <Line>1.html</Line>
              </SlideThumb>
              <SlideThumb no={5} title="下载数据包">
                <Line $dot $h={12}>1、有图片文件的，要放到d盘根目录</Line>
                <Line $dot $h={12}>2、直接导入淘宝助理</Line>
              </SlideThumb>
            </ThumbList>
            <VScroll>
              <Arrow aria-label="向上滚动"><Chevron d="up" /></Arrow>
              <ScrollThumb $size="21%" />
              <Space />
              <Arrow aria-label="向下滚动"><Chevron d="down" /></Arrow>
            </VScroll>
          </ThumbArea>
          <ViewRow>
            <ViewButton $on aria-label="普通视图"><Icon n="normal" /></ViewButton>
            <ViewButton aria-label="幻灯片浏览视图"><Icon n="sorter" /></ViewButton>
            <ViewButton aria-label="幻灯片放映"><Icon n="show" /></ViewButton>
            <HScroll>
              <Arrow $off aria-label="向左滚动"><Chevron d="left" off /></Arrow>
              <Arrow $off aria-label="向右滚动"><Chevron d="right" off /></Arrow>
            </HScroll>
          </ViewRow>
        </Outline>

        <Editor>
          <StageRow>
            <Stage>
              <Slide>
                <Swirls id="m" />
                <SlideTitle>第二课数据包使用</SlideTitle>
                <SlideSub>淘创网社区<br />VIP会员必看核心课程</SlideSub>
              </Slide>
            </Stage>
            <VScroll>
              <Arrow aria-label="向上滚动"><Chevron d="up" /></Arrow>
              <ScrollThumb $size="8%" />
              <Space />
              <Arrow aria-label="向下滚动"><Chevron d="down" /></Arrow>
              <Jump $first aria-label="上一张幻灯片"><svg width="8" height="9"><path d="M0 4l4-4 4 4zM0 9l4-4 4 4z" /></svg></Jump>
              <Jump aria-label="下一张幻灯片"><svg width="8" height="9"><path d="M0 0l4 4 4-4zM0 5l4 4 4-4z" /></svg></Jump>
              <Corner />
            </VScroll>
          </StageRow>
          <NotesRow>
            <Notes aria-label="备注" placeholder="单击此处添加备注" />
            <Watermark>淘创网 www.taochuangweb.com</Watermark>
            <VScroll>
              <Arrow $off aria-label="向上滚动"><Chevron d="up" off /></Arrow>
              <Space />
              <Arrow $off aria-label="向下滚动"><Chevron d="down" off /></Arrow>
            </VScroll>
          </NotesRow>
        </Editor>
      </Workspace>

      <BottomDock>
        <Bar>
          <Grip />
          <TextButton $menu><span>绘图<Key k="R" /></span></TextButton>
          <Tools items={[["v", "绘图菜单"]]} />
          <Gap />
          <Tools items={[["pointer", "选择对象", true], ["|"]]} />
          <TextButton $menu><span>自选图形<Key k="U" /></span></TextButton>
          <Tools items={[["v", "自选图形菜单"], ["line", "直线"], ["arrow", "箭头"], ["rect", "矩形"], ["oval", "椭圆"], ["textBox", "文本框"], ["vTextBox", "竖排文本框"], ["wordArt", "艺术字"], ["diagram", "图示"], ["clipArt", "剪贴画"], ["picture", "图片"], ["|"], ["fill", "填充颜色"], ["v", "填充颜色列表"], ["brush", "线条颜色"], ["v", "线条颜色列表"], ["fontColor", "字体颜色"], ["v", "字体颜色列表"], ["lineStyle", "线型"], ["dashStyle", "虚线线型"], ["arrowStyle", "箭头样式"], ["shadow", "阴影样式"], ["cube", "三维效果样式"]]} />
          <OverflowTab aria-label="工具栏选项"><MoreMark /></OverflowTab>
        </Bar>
      </BottomDock>

      <StatusBar>
        <StatusCell $w={245}>幻灯片<Mono> 1 / 11</Mono></StatusCell>
        <StatusCell $w={245}><Mono>1_Stream</Mono></StatusCell>
        <StatusCell $w={177}>中文<Mono>(</Mono>中国<Mono>)</Mono></StatusCell>
        <StatusCell $w={31} />
      </StatusBar>
      <TaskBar>
        <StartEdge />
        <TrayEdge />
      </TaskBar>
    </Window>
  );
}
